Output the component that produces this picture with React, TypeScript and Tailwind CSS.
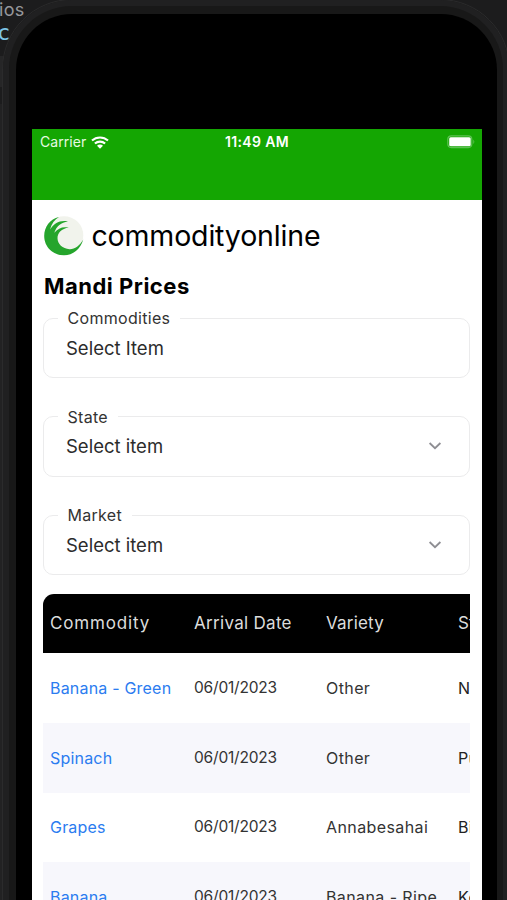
import React from "react";

type FieldProps = { label: string; value: string; chevron?: boolean };

function Field({ label, value, chevron }: FieldProps) {
  return (
    <fieldset className="h-[70px] w-[427px] rounded-[10px] border-[1.5px] border-[#ebebec] pl-[13.500px]">
      <legend className="h-[20px] px-[10px] text-[16px] leading-[20px] tracking-[0.3px] text-[#333]">{label}</legend>
      <div className="flex h-[39px] items-center justify-between pl-[8.500px] pr-[27px]">
        <span className="text-[18.5px] leading-[24px] text-[#2b2b2b]">{value}</span>
        {chevron && (
          <svg width="14" height="10" viewBox="0 0 14 10" fill="none">
            <path d="M1.6 2 7 7.2 12.4 2" stroke="#8e8e93" strokeWidth="1.8" />
          </svg>
        )}
      </div>
    </fieldset>
  );
}

const rows = [
  { name: "Banana - Green", variety: "Other", state: "Nagaland", bg: "bg-white" },
  { name: "Spinach", variety: "Other", state: "Punjab", bg: "bg-[#f7f7fc]" },
  { name: "Grapes", variety: "Annabesahai", state: "Bihar", bg: "bg-white" },
  { name: "Banana", variety: "Banana - Ripe", state: "Kerala", bg: "bg-[#f7f7fc]" },
];

function Logo() {
  return (
    <svg width="40" height="40" viewBox="0 0 40 40" className="shrink-0">
      <circle cx="20" cy="19.5" r="19.3" fill="#f1f3ec" />
      <path
        d="M15 1.1C6 3 .2 11 .2 20 .2 31 9 39.300 20 39.300 29 39.300 36.500 33 39.200 23.500 35.500 30 30.500 33.500 25.500 33.200 18.500 32.800 13.500 28 13.500 22.300 13.500 17 17.500 12.800 24.800 11.600 19 10.300 14 12 10.300 16.800 12.500 10.200 17 6.700 24 5.300 16 3.800 10 7 6 13.500 7.500 7.700 10.500 4 15 1.100Z"
        fill="#25a52c"
      />
    </svg>
  );
}

export default function App() {
  return (
    <div className="relative h-[900px] w-[507px] overflow-hidden bg-[#1c1c1d] font-['Inter','Liberation_Sans',sans-serif]">
      <div className="flex flex-col">
        <span className="-ml-px h-[20px] text-[18px] leading-[19px] tracking-[0.3px] text-[#96979b]">ios</span>
        <span className="-ml-[3px] h-[26px] font-['DejaVu_Sans_Mono',monospace] text-[22px] leading-[26px] text-[#7cc4e6]">c</span>
        <span className="mt-[10px] h-[31px] w-[10px] bg-[#262627]" />
        <span className="mt-[17px] h-[796px] w-[8px] bg-[#222223]" />
      </div>

      <div className="absolute left-[2px] top-[-1px] h-[1000px] w-[508px] rounded-[70px] border border-[#2b2b2c] bg-[#181818] pl-[13px] pt-[14px] shadow-[inset_0_0_0_6px_#202021]">
        <div className="h-[960px] w-[481px] rounded-[56px] bg-black pl-[16px] pt-[115px]">
          <div className="h-[800px] w-[450px] bg-white">
            <header className="h-[71px] bg-[#14a602] text-white">
              <div className="flex h-[26px] items-center pl-[8px] pr-[7px]">
                <div className="flex w-[185px] items-center gap-[5px]">
                  <span className="text-[14px] leading-[18px] tracking-[0.05px] text-[#e6fae2]">Carrier</span>
                  <svg width="18" height="13" viewBox="0 0 18 13" fill="none" stroke="white" strokeWidth="2.1">
                    <path d="M1 4.600C5.500.4 12.500.4 17 4.600M3.900 7.600c2.900-2.700 7.300-2.700 10.200 0" />
                    <path d="M6 9.700c1.700-1.500 4.300-1.500 6 0l-3 3Z" fill="white" stroke="none" />
                  </svg>
                </div>
                <span className="text-[14px] font-semibold leading-[18px] tracking-[0.35px]">11:49 AM</span>
                <svg className="ml-auto" width="28" height="14" viewBox="0 0 28 14">
                  <rect x="0.800" y="0.800" width="24" height="11.800" rx="3.500" fill="none" stroke="#5cc152" strokeWidth="1.200" />
                  <rect x="2.200" y="2.200" width="21.500" height="9" rx="1.500" fill="white" />
                  <path d="M26.300 4.500q2 2.300 0 4.600Z" fill="#5cc152" />
                </svg>
              </div>
            </header>
            <main className="pl-[11.500px] pr-[11.500px] pt-[16px]">
              <div className="flex h-[40px] items-center gap-[8px]">
                <Logo />
                <span className="-mt-px whitespace-nowrap text-[28.500px] leading-[34px] tracking-[-0.160px] text-black">commodityonline</span>
              </div>
              <h1 className="mt-[15px] h-[30px] whitespace-nowrap pl-[0.500px] text-[22px] font-bold leading-[30px] tracking-[0.500px] text-black">Mandi Prices</h1>
              <div className="-ml-[0.500px] mt-[7.400px] flex flex-col gap-[28.500px]">
                <Field label="Commodities" value="Select Item" />
                <Field label="State" value="Select item" chevron />
                <Field label="Market" value="Select item" chevron />
              </div>
              <div className="-ml-[0.500px] mt-[19px] w-[427px] overflow-hidden rounded-tl-[11px]">
                <div className="w-[580px] whitespace-nowrap text-[16px]">
                  <div className="grid h-[59px] grid-cols-[144px_132px_132px_160px] items-center bg-black pl-[7px] text-[17px] text-[#dcdcdc]">
                    <span className="tracking-[0.850px]">Commodity</span>
                    <span className="tracking-[0.300px]">Arrival Date</span>
                    <span className="tracking-[0.200px]">Variety</span>
                    <span>State</span>
                  </div>
                  {rows.map((r) => (
                    <div key={r.name} className={`grid h-[69.600px] grid-cols-[144px_132px_132px_160px] items-center pl-[7px] leading-[24px] text-[#333] ${r.bg}`}>
                      <span className="tracking-[0.200px] text-[#2b7cf0]">{r.name}</span>
                      <span className="text-[15.500px] tracking-[-0.200px]">06/01/2023</span>
                      <span className="tracking-[0.400px]">{r.variety}</span>
                      <span className="tracking-[0.400px] text-[#222]">{r.state}</span>
                    </div>
                  ))}
                </div>
              </div>
            </main>
          </div>
        </div>
      </div>
    </div>
  );
}
